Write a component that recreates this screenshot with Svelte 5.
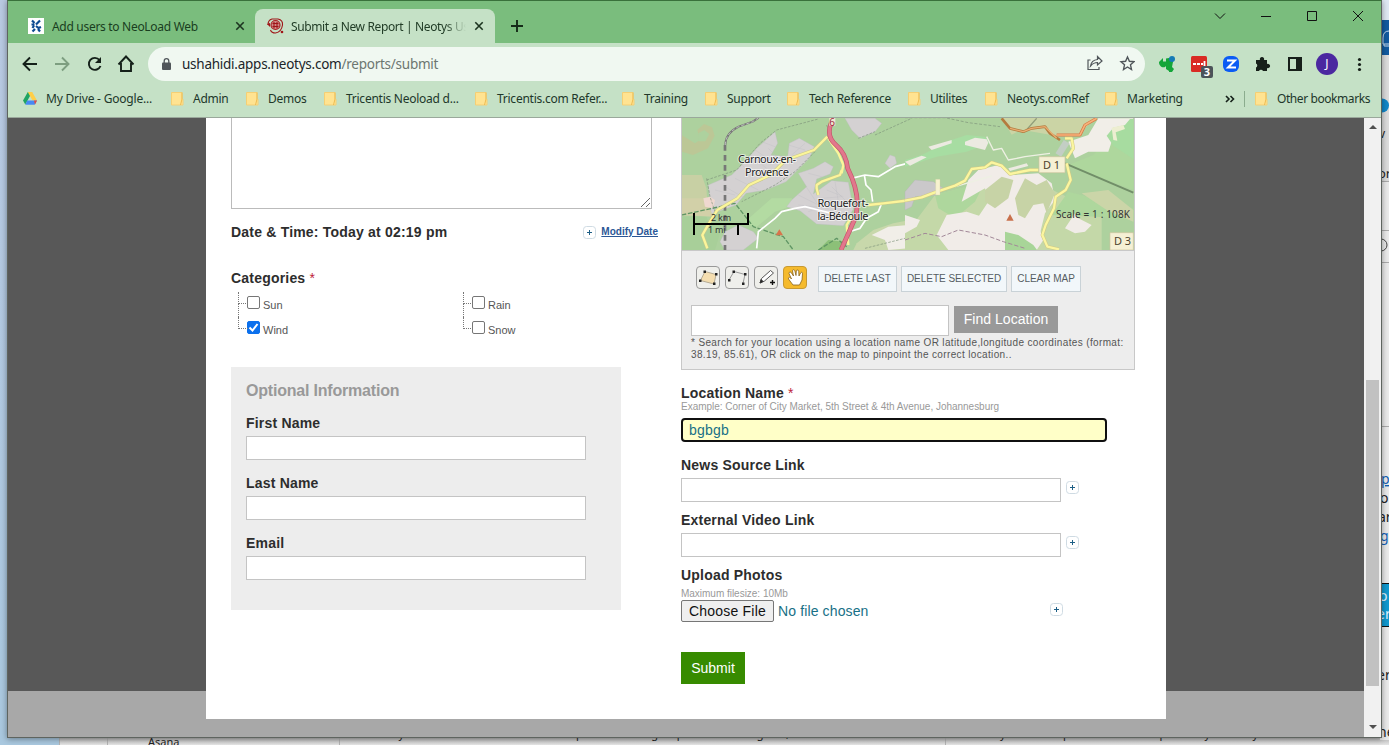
<script>
  const bookmarks = [
    { name: 'Admin', w: 75 },
    { name: 'Demos', w: 78 },
    { name: 'Tricentis Neoload d...', w: 151 },
    { name: 'Tricentis.com Refer...', w: 147 },
    { name: 'Training', w: 83 },
    { name: 'Support', w: 82 },
    { name: 'Tech Reference', w: 121 },
    { name: 'Utilites', w: 77 },
    { name: 'Neotys.comRef', w: 120 },
    { name: 'Marketing', w: 116 }
  ];
  const categories = [
    { name: 'Sun', on: false },
    { name: 'Rain', on: false },
    { name: 'Wind', on: true },
    { name: 'Snow', on: false }
  ];
  const optional = ['First Name', 'Last Name', 'Email'];
  const links = ['News Source Link', 'External Video Link'];
</script>

{#snippet folder()}
  <svg class="folder" width="13" height="14" viewBox="0 0 13 14">
    <path d="M.5.500h10.500v6l1 1v5.500H.5z" fill="#ffe391" stroke="#f5cf74" />
    <path d="M11 .5v6.500l-1.500 6" fill="none" stroke="#eebc52" />
  </svg>
{/snippet}

{#snippet plus()}
  <svg class="plus" width="13" height="13" viewBox="0 0 13 13">
    <rect x=".5" y=".5" width="12" height="12" rx="3" fill="#fff" stroke="#cfdbe3" />
    <path d="M4 6.500h5M6.500 4v5" stroke="#1d5f86" fill="none" />
  </svg>
{/snippet}

{#snippet cross()}
  <svg class="cross" width="10" height="10" viewBox="0 0 10 10"><path d="M1.300 1.300l7.400 7.400M8.700 1.300L1.300 8.700" stroke="#1c3420" stroke-width="1.600" /></svg>
{/snippet}

<div class="desktop">
  <svg class="behind" width="1389" height="745" viewBox="0 0 1389 745">
    <defs>
      <linearGradient id="sky" x1="0" y1="0" x2="0" y2="1">
        <stop offset="0" stop-color="#b9c9e2" /><stop offset="1" stop-color="#a9c8df" />
      </linearGradient>
      <linearGradient id="shade" x1="0" y1="0" x2="0" y2="1">
        <stop offset="0" stop-color="#aaa" /><stop offset="1" stop-color="#e6e6e6" />
      </linearGradient>
    </defs>
    <rect width="60" height="745" fill="url(#sky)" />
    <rect x="60" y="736" width="1329" height="9" fill="url(#shade)" />
    <path d="M59.500 738v7M107.500 738v7M339.500 738v7M945.500 738v7" stroke="#b3b3b3" />
    <rect x="1380" width="9" height="20" fill="#dfe8f3" />
    <rect x="1380" y="20" width="9" height="35" fill="#125a9f" />
    <path d="M1389 31q-6 0-6 7v6h6M1384 44v2h5" fill="none" stroke="#c8dcf0" />
    <rect x="1380" y="55" width="9" height="126" fill="#dcdcdc" />
    <circle cx="1382" cy="105.500" r="7" fill="#1287c8" />
    <rect x="1380" y="181" width="9" height="559" fill="#eaeaea" />
    <path d="M1380 181.500h9M1380 230.500h9M1380 262.500h9M1380 426.500h9" stroke="#aaa" />
    <circle cx="1381" cy="245" r="6" fill="none" stroke="#444" />
    <rect x="1380" y="584" width="9" height="42" fill="#1199cf" />
    <path d="M1380 583.500h9M1380 626.500h9" stroke="#111" />
    <g class="peek">
      <text x="1379" y="138" font-size="12">v</text><text x="1378" y="178" font-size="13">or</text>
      <text class="lnk" x="1381" y="484">p</text><text x="1380" y="503">o</text>
      <text x="1378" y="522">ar</text><text class="lnk" x="1380" y="541">g</text>
      <text class="inv" x="1379" y="601">o</text><text class="inv" x="1377" y="619">er</text>
      <text x="1377" y="680">er</text><text x="1378" y="737">ne</text>
      <text class="small" x="148" y="746">Asana</text>
      <text class="small" x="369" y="738" textLength="420">Hi etsy I have shared details for next steps and awaiting response - Best Regards,</text>
      <text class="small" x="982" y="738" textLength="276">they would help users and then provide you many</text>
    </g>
  </svg>

  <div class="window">
    <header class="tabs">
      <div class="tab">
        <svg width="16" height="16" viewBox="0 0 16 16"><rect width="16" height="16" fill="#fff" /><path d="M4 2.500l2.500 2.500M12 2.500L8 6.500M3.500 6.500h3M6 7.500L4.500 10M8 8l2.500 2 2.500-1M4.500 13.500L7 11M12 13.500l-2-2.500" fill="none" stroke="#0d4a91" stroke-width="2.200" /></svg>
        <span class="title first">Add users to NeoLoad Web</span>
        {@render cross()}
      </div>
      <div class="tab active">
        <svg width="17" height="16" viewBox="0 0 17 16"><circle cx="8.500" cy="7" r="4.500" fill="#cf8a85" stroke="#a82023" stroke-width="1.200" /><path d="M1 7q0-5 4-6h6q5 1 4.500 6-1 7-7 8-4 0-5-3M5.500 5.500h6M5.500 8.500h6M7 4v6.500M10 4v6.500" fill="none" stroke="#a01518" stroke-width="1.100" /><circle cx="15" cy="14" r="1.300" fill="#a01518" /><path d="M0 6l3-1v4z" fill="#a01518" /></svg>
        <span class="title second">Submit a New Report | Neotys Us</span>
        {@render cross()}
      </div>
      <svg class="new" width="12" height="12" viewBox="0 0 12 12"><path d="M6 0v12M0 6h12" stroke="#142b18" stroke-width="1.900" /></svg>
      <svg class="controls" width="152" height="14" viewBox="0 0 152 14" fill="none" stroke="#111">
        <path d="M2 4.500l5 5 5-5M48 7.500h10M94.500 2.500h9v9h-9zM140 2l10 10M150 2l-10 10" />
      </svg>
    </header>

    <div class="toolbar">
      <svg class="nav" width="116" height="20" viewBox="0 0 116 20" fill="none" stroke="#142019" stroke-width="1.900">
        <path d="M16 9H2.500M9 2.500L2.500 9l6.500 6.500" />
        <path d="M34 9h13.500M41 2.500l6.500 6.500-6.500 6.500" stroke="#7d9e80" />
        <path d="M78.500 5A6 6 0 1 0 79.500 11" /><path d="M80 2v6h-6z" fill="#142019" stroke="none" />
        <path d="M97.500 9.500l7.500-8 7.500 8M100 8v8h10V8" />
      </svg>
      <div class="address">
        <svg width="10" height="13" viewBox="0 0 10 13"><rect y="4.500" width="9" height="7.500" rx="1" fill="#50565a" /><path d="M2.200 5.500V3a2.300 2.300 0 0 1 4.600 0v2.500" fill="none" stroke="#50565a" stroke-width="1.300" /></svg>
        <span class="url">ushahidi.apps.neotys.com<i>/reports/submit</i></span>
        <svg class="actions" width="49" height="18" viewBox="0 0 49 18" fill="none" stroke="#50565a" stroke-width="1.200">
          <path d="M4.500 5H2v9.500h11V12M4.500 11q1-6 7-6.500V1.500L16 6l-4.500 4V7.500q-4 0-7 3.500z" />
          <path d="M41.500 2l1.900 4.300 4.600.4-3.500 3.100 1 4.700-4-2.500-4 2.500 1-4.700-3.500-3.100 4.600-.4z" stroke-width="1.400" />
        </svg>
      </div>
      <svg class="extensions" width="212" height="28" viewBox="1156 51 212 28">
        <path d="M1163 58l-4 4c0 4 3 6 6 5l1-1v3l3 2v1h3l2-3-2-2 1-5c0-3-2-4-4-4l-3 .5v3h-3z" fill="#13a538" />
        <circle cx="1172" cy="59" r="3" fill="#147bb5" />
        <rect x="1191" y="56" width="16" height="16" rx="1.500" fill="#d92b24" />
        <path d="M1193 64h3M1197 64h3M1201 64h2M1204.500 61v5" stroke="#fff" stroke-width="1.800" />
        <rect x="1201" y="66" width="12" height="12" rx="2" fill="#4c5359" />
        <text x="1203.800" y="76" font-size="11" font-weight="bold" fill="#fff">3</text>
        <rect x="1223" y="56" width="16" height="16" rx="6" fill="#0b5cf4" />
        <path d="M1227 60.500h8l-7 7h8" fill="none" stroke="#fff" stroke-width="2" />
        <path d="M1256 60h4a2.200 2.200 0 1 1 4 0h3v4a2.200 2.200 0 1 1 0 4v3h-4a2.200 2.200 0 0 0-4 0h-3v-3.500a2.200 2.200 0 0 0 0-4z" fill="#17201a" />
        <path d="M1289 58h12v12h-12z" fill="none" stroke="#17201a" stroke-width="2" /><rect x="1296" y="57" width="6" height="14" fill="#17201a" />
        <circle cx="1327" cy="64" r="11" fill="#4b28a0" />
        <text x="1327" y="68" text-anchor="middle" font-size="12" fill="#fff">J</text>
        <g fill="#17201a"><circle cx="1359.500" cy="59.500" r="1.600" /><circle cx="1359.500" cy="64.500" r="1.600" /><circle cx="1359.500" cy="69.500" r="1.600" /></g>
      </svg>
    </div>

    <nav class="bookmarks">
      <div class="mark drive">
        <svg width="14" height="13" viewBox="0 0 14 13"><path d="M4.800 0h4.400L7 4 2.300 12.500 0 8.500z" fill="#1fa463" /><path d="M4.800 0h4.400L14 8.500H9.500z" fill="#ffcf48" /><path d="M4.200 8.500H14l-2.300 4.200H2.300z" fill="#4688f4" /><path d="M11 8.500h3l-2 4z" fill="#e5493c" /></svg>
        <span>My Drive - Google...</span>
      </div>
      {#each bookmarks as b}
        <div class="mark" style="width:{b.w}px">{@render folder()}<span>{b.name}</span></div>
      {/each}
      <svg class="more" width="10" height="8" viewBox="0 0 10 8"><path d="M1 1l3 3-3 3M5.500 1l3 3-3 3" fill="none" stroke="#142019" stroke-width="1.600" /></svg>
      <span class="sep"></span>
      <div class="mark other">{@render folder()}<span>Other bookmarks</span></div>
    </nav>

    <div class="view">
      <div class="page">
        <main class="sheet">
          <section class="left">
            <div class="textarea">
              <svg width="9" height="9" viewBox="0 0 9 9"><path d="M0 9l9-9M5 9l4-4" stroke="#555" stroke-width=".9" /></svg>
            </div>
            <div class="daterow">
              <h4>Date &amp; Time: Today at 02:19 pm</h4>
              {@render plus()}
              <a href="#date">Modify Date</a>
            </div>
            <h4 class="cathead">Categories <em>*</em></h4>
            <div class="cats">
              {#each categories as c, i}
                <label class="cat" class:last={i > 1}>
                  <span class="box" class:on={c.on}>
                    {#if c.on}<svg width="11" height="11" viewBox="0 0 11 11"><path d="M1.500 5.500l3 3 5-6.500" fill="none" stroke="#fff" stroke-width="2" /></svg>{/if}
                  </span>
                  <span class="catname">{c.name}</span>
                </label>
              {/each}
            </div>
            <div class="optional">
              <h3>Optional Information</h3>
              {#each optional as o}
                <h4>{o}</h4>
                <div class="field"></div>
              {/each}
            </div>
          </section>

          <section class="right">
            <div class="mapbox">
              <svg class="map" width="452" height="132" viewBox="682 118 452 132">
                <rect x="682" y="118" width="452" height="132" fill="#add19e" />
                <g transform="translate(675 115) scale(.33333)" fill="none" stroke-linejoin="round">
                  <path d="M20 180l60 0 14 40 6 80-80 2z" fill="#c8d0a4" />
                  <path d="M20 60l40 25 15-10-8-30 20-18 24 10 8 25-20 38-45 20-34-10z" fill="#bcc796" />
                  <path d="M70 55l18-10 15 12-12 22-20 0z" fill="#add19e" />
                  <path d="M210 320l80-70 60 0 10 20-60 20-60 50z" fill="#b3dba2" />
                  <path d="M545 385l50-40 60-20 50-10v90h-170z" fill="#c8d8ab" />
                  <path d="M590 360l50-25 60-5v70l-60 5-10-30z" fill="#f1eee8" />
                  <path d="M20 305l75 0 10 30 30 20-15 50H20z" fill="#a8cf99" />
                  <g fill="#d4d1d2" stroke="#bdbbc1" stroke-width="1">
                    <path d="M100 210l70-30 35-35 40-45 55-50 8 35-20 35 50 5 5-40 30-15 45 25-15 35-30 30-40 40-60 25-60 10-30 35-75 28z" />
                    <path d="M350 255l45-40-25-40 45-15 35-20 25 15-10 22-40 15-10 45 55-40 50 5 15 80-30 50-80-5-50-40-40-12z" />
                    <path d="M510 10h90l20 15-20 25-45 20-25-25zM630 145l15-25 15 5 5 20-20 15z" />
                    <path d="M150 350l40-20 45 20 15 20-45 35h-55l-15-25z" />
                    <path d="M195 145l40 35M180 190l70 35M150 215l60 35M225 120l50 40M280 100l30 30M350 120l40-35M370 240l60 30M390 210l40 60M455 225l50 20M480 200l10 60M370 270l90 10M120 225l60 15M240 105l30 20M250 140l60-10M260 80l40 15M340 90l50 15M400 175l40 10M440 250l60-5M470 215l60 60M400 290l90-30" />
                  </g>
                  <path d="M20 250h70l10 20 15 35-95-5z" fill="#d2d0a8" />
                  <path d="M85 250l20-5 15 10-5 25-25-5z" fill="#efd8d0" />
                  <path d="M430 405l30-30 45 5 0 25z" fill="#8cc078" />
                  <path d="M20 300l160-35 55 70 90 30 30 40M430 405l55-35 30 25" stroke="#5f9564" stroke-width="4" stroke-dasharray="14 5" />
                  <path d="M95 190l10 55 20 60M95 195l90-30 70-80 50-40 125-33M420 110l-60 60-60 40-100 50M455 30l5 15M600 60l110-50M570 400l140-35M550 70l50-20" stroke="#7d927a" stroke-width="2" stroke-dasharray="8 4" />
                  <path d="M150 90v315" stroke="#777" stroke-width="8" stroke-dasharray="17 13" />
                  <path d="M151 90q0-35 40-55l42-15 18-12" stroke="#777" stroke-width="6" />
                  <path d="M151 90q0-35 40-55l42-15 18-12" stroke="#e1e1e1" stroke-width="2" stroke-dasharray="10 6" />
                  <path d="M245 400l5-50 50-40 20-20 40-10 30-5 40 10 40 10M530 190l40-10 40 5 50-30 45-12M568 180l5 30 15 15 5 35M620 265l-10 25-35 20-20 30-25 8" stroke="#fff" stroke-width="5" />
                  <path d="M97 400l-15-40 20-35 25-40 60-35 35-40 65-30 45-45 85-30 40-40M500 165l-5 15-55 20-15 10 0 10 5 20M580 270l45-5 85-10" stroke="#c9c88b" stroke-width="10" />
                  <path d="M97 400l-15-40 20-35 25-40 60-35 35-40 65-30 45-45 85-30 40-40M500 165l-5 15-55 20-15 10 0 10 5 20M580 270l45-5 85-10M460 70l30 45 15 35-5 25M520 390l-5-60 15-25" stroke="#fbf59a" stroke-width="7" />
                  <path d="M468 25q-15 40 15 65t35 70q45 90 20 155l-40 90" stroke="#c4556a" stroke-width="14" />
                  <path d="M468 25q-15 40 15 65t35 70q45 90 20 155l-40 90" stroke="#e2778c" stroke-width="10" />
                  <path d="M302 361l11-18 11 18z" fill="#d8744b" />
                  <rect x="463" y="3" width="18" height="29" fill="#eee8d2" />
                </g>
                <g transform="translate(905 115) scale(.33333)" fill="none" stroke-linejoin="round">
                  <path d="M290 9h280l-50 50-60 5-110-20-30 15z" fill="#cbd4a5" />
                  <path d="M0 350l30-30 60-80 120-30 120 10 60-20 200 95v110H0z" fill="#c4d8a8" />
                  <path d="M490 150l195 75V100l-70-35-50 55zM440 300l50-70 195 50v35l-110-10zM90 240l150-40-30 60-60 50-50-30z" fill="#aed79d" />
                  <path d="M530 235l80-10 75 60v35l-80-35z" fill="#cbd5a8" />
                  <path d="M0 135l50-15 90-45 45-15 55 5 15 20-70 25-90 15-95 30z" fill="#a7dda2" />
                  <path d="M580 10l60 0 45 0-25 40-30 0-20 60-60 0-40 20-20-50 60-20z" fill="#f1eee8" />
                  <path d="M625 38l35-8 15-18 10 0v120l-60-40-20-30z" fill="#a7dca0" />
                  <path d="M620 38l35-8 5 12-28 10 5 25-12-2z" fill="#edeed1" />
                  <path d="M190 195l30-30 60-15 45 30 75-5 40 30 10 50-30 40-20 80-40 25-50-40-50 10-20-30-30-20 40-60-10-40-70 40z" fill="#f1ece8" />
                  <path d="M95 360l30-60 60-10 60 20 60-20 40 40 60 15 10 30-20 30H130zM0 300l45 15-10 20-35 20zM480 340l30-45 10 15 40 20-20 20-30 5z" fill="#f1ece8" />
                  <path d="M240 225l50-40 35 10-15 55-40 30-30-20z" fill="#c7d3a6" />
                  <path d="M330 250l30-60 35 20 30-15 25 40-25 60-10-30-30 5-25 40-20-10z" fill="#c7d3a6" />
                  <path d="M300 350l40 10 45 30 15 20h-100z" fill="#a8d598" />
                  <path d="M0 230l30-35 55 5 30 20-15 20-70 5-10 30-20 10z" fill="#cac8ca" stroke="#b2b1b7" />
                  <path d="M0 140l50-18 15 5-50 25zM70 95l70-20v10l-60 20zM180 80l30-12 35 5 5 10-10 22-60-15zM310 160l55-15 5 8-55 15z" fill="#eceae1" />
                  <path d="M0 8l120 0 70 15 95 12" stroke="#7d927a" stroke-width="2" stroke-dasharray="9 5" />
                  <path d="M0 375l60-20 50 10 50-20 80 15 55 20 65 20" stroke="#a28898" stroke-width="3" stroke-dasharray="13 6" />
                  <path d="M480 145l205 88" stroke="#718e68" stroke-width="6" /><path d="M395 10l-35 40" stroke="#909c79" stroke-width="4" />
                  <path d="M245 65l20 40 25-5 20 35 50-10 75-10M150 215l110-32" stroke="#eef0e3" stroke-width="4" />
                  <path d="M485 80l-25 40" stroke="#c3cec4" stroke-width="20" />
                  <path d="M290 10l25 30 40 10 25-10 40-5 15 20 30 20" stroke="#b47b3e" stroke-width="8" />
                  <path d="M315 40l40 10 25-10 40-5 35 35" stroke="#e9ae72" stroke-width="4" />
                  <path d="M455 60l70 0 15-30 35-20" stroke="#da7946" stroke-width="9" /><path d="M455 60l70 0 15-30 35-20" stroke="#f6b37b" stroke-width="5" />
                  <path d="M0 257l50-10 40-15 60-20 30-15 20-35 40-5 20-15 30 10 25 25 60-12 25 0M485 145l12 50-15 30-30 20-5 35-25 50-10 30 15 35 35 8M485 130l20-30-5-30-20 0" stroke="#d0c985" stroke-width="10" />
                  <path d="M0 257l50-10 40-15 60-20 30-15 20-35 40-5 20-15 30 10 25 25 60-12 25 0M485 145l12 50-15 30-30 20-5 35-25 50-10 30 15 35 35 8M485 130l20-30-5-30-20 0" stroke="#fbf69f" stroke-width="7" />
                  <path d="M304 317l11-20 11 20z" fill="#c8704c" />
                  <path d="M92 193h13v47h-13z" fill="#f7f2cf" stroke="#d9d1a3" />
                  <path d="M402 125h78v48h-78zM615 353h70v52h-70z" fill="#f5f0d4" stroke="#cdc69f" stroke-width="2" />
                </g>
                <g class="place">
                  <text x="767" y="163" textLength="58">Carnoux-en-</text>
                  <text x="767" y="176" textLength="44">Provence</text>
                  <text x="843" y="206.500" textLength="51">Roquefort-</text>
                  <text x="843" y="219.500" textLength="51">la-Bédoule</text>
                </g>
                <g class="road"><text x="1051.500" y="169">D 1</text><text x="1122.500" y="245">D 3</text><text class="six" x="832" y="126">6</text></g>
                <g class="scale"><text class="sm" x="711" y="221">2 km</text><text class="sm" x="708" y="233">1 mi</text><text x="1056" y="218" textLength="74">Scale = 1 : 108K</text></g>
                <path d="M694 213v22M693 224h56M748 213v12M738 224v11" fill="none" stroke="#000" stroke-width="2" />
              </svg>
              <div class="tools">
                <span class="tool"><svg width="22" height="21" viewBox="0 0 22 21"><path d="M3.500 13.500L8 4.500l11 3-2 9.500z" fill="#f5deb0" stroke="#b5ab94" /><path d="M2 12.500h2.500V15H2zM6.500 3.500H9V6H6.500zM18 6h2.500v2.500H18zM16 15.500h2.500V18H16z" fill="#222" /></svg></span>
                <span class="tool"><svg width="22" height="21" viewBox="0 0 22 21"><path d="M3 13L8 4.500l11 3-2 9" fill="none" stroke="#999" /><path d="M2 12h2.500v2.500H2zM6.500 3.500H9V6H6.500zM18 6h2.500v2.500H18zM16 15.500h2.500V18H16z" fill="#222" /></svg></span>
                <span class="tool"><svg width="22" height="21" viewBox="0 0 22 21"><path d="M5 16l1.500-4.500L15.500 3.500l3 2.500L9.500 14z" fill="#fff" stroke="#555" /><path d="M5 16l1.200-3.500L8 14.500z" fill="#222" stroke="#333" /><path d="M15 15.500h5M17.500 13v5" stroke="#111" stroke-width="1.400" /></svg></span>
                <span class="tool on"><svg width="22" height="21" viewBox="0 0 22 21"><path d="M9 18L4.500 12c-.5-2 1.500-2.500 3 0L5 6.500c0-2 1.800-2 2.500-.5L9.500 9 8.500 4c.3-2 2-1.500 2.400 0L12 8.500l.3-4.500c.5-1.500 2.200-1.300 2.400.2L15 9l1.500-3c.8-1.300 2.200-.8 2 .8L18 13l-2.500 5z" fill="#fff" stroke="#89631c" stroke-width=".8" /></svg></span>
                <button class="del d1">DELETE LAST</button>
                <button class="del d2">DELETE SELECTED</button>
                <button class="del d3">CLEAR MAP</button>
              </div>
              <div class="search"><div class="query"></div><button class="find">Find Location</button></div>
              <p class="help">* Search for your location using a location name OR latitude,longitude coordinates (format:<br />38.19, 85.61), OR click on the map to pinpoint the correct location..</p>
            </div>

            <h4 class="loc">Location Name <em>*</em></h4>
            <p class="hint">Example: Corner of City Market, 5th Street &amp; 4th Avenue, Johannesburg</p>
            <div class="focus">bgbgb</div>
            {#each links as l}
              <h4 class="linkhead">{l}</h4>
              <div class="linkrow"><div class="field"></div>{@render plus()}</div>
            {/each}
            <h4 class="linkhead">Upload Photos</h4>
            <p class="hint photo">Maximum filesize: 10Mb</p>
            <div class="filerow">
              <button class="choose">Choose File</button><span>No file chosen</span>{@render plus()}
            </div>
            <button class="submit">Submit</button>
          </section>
        </main>
      </div>
      <div class="scroll">
        <svg width="8" height="4" viewBox="0 0 8 4"><path d="M0 4l4-4 4 4z" fill="#505050" /></svg>
        <div class="thumb"></div>
        <svg width="8" height="4" viewBox="0 0 8 4"><path d="M0 0l4 4 4-4z" fill="#505050" /></svg>
      </div>
    </div>
  </div>
</div>

<style>
  :global(body) { margin: 0; overflow: hidden; }
  * { box-sizing: border-box; }
  svg { display: block; flex: none; }
  h3, h4, p { margin: 0; }
  button { padding: 0; border: 0; font-family: inherit; }
  .desktop { position: relative; width: 1389px; height: 745px; overflow: hidden; font-family: "Liberation Sans", Arial, sans-serif; }
  .peek text { font-family: "Noto Sans", sans-serif; fill: #222; }
  .peek { font-size: 14px; }
  .peek .lnk { fill: #1260b5; text-decoration: underline; }
  .peek .inv { fill: #dff3ff; }
  .peek .small { font-size: 11px; }
  .window { position: absolute; left: 7px; top: 0; width: 1375px; height: 738px; border: 1px solid #5e645f; border-top-color: #39713b; display: flex; flex-direction: column; box-shadow: 0 1px 6px rgba(0, 0, 0, .4); font-family: "Noto Sans", sans-serif; }

  .tabs { height: 42px; background: #7abd7d; display: flex; align-items: flex-end; flex: none; }
  .tab { display: flex; align-items: center; height: 34px; width: 247px; padding: 0 10px 0 20px; font-size: 12px; color: #193e20; }
  .tab.active { background: #c5e1c6; width: 240px; border-radius: 8px 8px 0 0; padding: 0 11px 0 12px; color: #223d27; }
  .title { margin-left: 8px; flex: 1; white-space: nowrap; overflow: hidden; }
  .first { letter-spacing: -.3px; }
  .second { margin-left: 7px; margin-right: 8px; letter-spacing: -.37px; mask-image: linear-gradient(90deg, #000 88%, transparent); }
  .new { margin: 0 0 11px 16px; }
  .controls { margin: 0 16px 20px auto; }

  .toolbar { height: 43px; background: #c5e1c6; display: flex; align-items: center; padding: 0 8px 0 13px; flex: none; }
  .address { margin: -1px 0 0 11px; width: 997px; height: 34px; border-radius: 17px; background: #f0f8f1; display: flex; align-items: center; padding: 0 10px 0 14px; flex: none; }
  .url { margin-left: 10px; font-size: 13.500px; letter-spacing: -.25px; color: #20252a; }
  .url i { font-style: normal; color: #6c7670; }
  .actions { margin-left: auto; }
  .extensions { margin-left: 11px; }
  .bookmarks { height: 32px; background: #c5e1c6; border-bottom: 1px solid #9aa89b; display: flex; align-items: center; padding: 0 10px 6px 15px; font-size: 12px; color: #21372a; white-space: nowrap; letter-spacing: -.25px; flex: none; }
  .mark { display: flex; align-items: center; flex: none; gap: 9px; }
  .drive { width: 148px; letter-spacing: -.2px; }
  .other { letter-spacing: -.42px; }
  .more { margin-left: 4px; }
  .sep { width: 1px; height: 16px; margin: 0 10px 0 9px; background: #8bac8e; flex: none; }

  .view { height: 619px; display: flex; font-family: "Liberation Sans", Arial, sans-serif; }
  .page { width: 1356px; background: linear-gradient(#585858 573px, #a8a8a8 573px); display: flex; }
  .sheet { margin-left: 198px; width: 960px; height: 601px; background: #fff; padding-left: 25px; display: flex; }
  .scroll { width: 17px; background: #f1f1f1; display: flex; flex-direction: column; align-items: center; padding: 7px 0 8px; }
  .thumb { width: 13px; height: 306px; margin: 251px 0 auto; background: #c1c1c1; flex: none; }
  .left { width: 450px; }
  .right { width: 454px; }
  h4 { font-size: 14px; line-height: 16px; color: #2d2d2d; letter-spacing: .2px; white-space: nowrap; }
  em { font-style: normal; font-weight: normal; color: #bd1e39; }
  .textarea { width: 421px; height: 91px; border: solid #bbb; border-width: 0 1px 1px; display: flex; justify-content: flex-end; align-items: flex-end; padding: 1px; }
  .daterow { display: flex; align-items: center; height: 16px; margin-top: 15px; width: 427px; }
  .daterow h4 { flex: 1; }
  .daterow a { margin: -2px 0 0 5px; font-size: 10px; font-weight: bold; color: #2b5796; }
  .cathead { margin-top: 30px; }
  .cats { display: grid; grid-template-columns: 225px 225px; grid-auto-rows: 25px; margin: 6px 0 0 7px; }
  .cat { display: flex; position: relative; padding: 4px 0 0 9px; font-size: 11px; color: #555; }
  .cat::before { content: ''; position: absolute; left: 0; top: 0; width: 9px; height: 11px; border-left: 1px dotted #777; border-bottom: 1px dotted #777; }
  .cat:not(.last)::after { content: ''; position: absolute; left: 0; top: 11px; height: 14px; border-left: 1px dotted #777; }
  .box { width: 13px; height: 13px; border: 1px solid #767676; border-radius: 2px; background: #fff; }
  .box.on { border-color: #0b70ed; background: #0b70ed; }
  .catname { margin: 3px 0 0 3px; line-height: 13px; }
  .optional { margin-top: 25px; width: 390px; height: 243px; background: #ededed; padding: 14px 15px; }
  .optional h3 { font-size: 16px; line-height: 19px; color: #999; letter-spacing: -.2px; }
  .optional h4 { margin-top: 15px; }
  .field { width: 340px; height: 24px; background: #fff; border: 1px solid #c4c4c4; }
  .optional .field { margin-top: 5px; }

  .mapbox { height: 252px; border: solid #c8c8c8; border-width: 0 1px 1px; background: #ededed; }
  .map { border-bottom: 1px solid #c8c8c8; height: 133px; }
  .place text { font: 11px "Noto Sans", sans-serif; text-anchor: middle; fill: #222; stroke: #fff; stroke-width: 2px; stroke-opacity: .6; paint-order: stroke; }
  .road text { font: 11px "Noto Sans", sans-serif; text-anchor: middle; fill: #4c432e; }
  .road .six { fill: #a42942; font-size: 10px; }
  .scale text { font: 10px "Noto Sans", sans-serif; fill: #333; }
  .scale .sm { font-size: 9px; letter-spacing: -.2px; }
  .tools { display: flex; padding: 15px 0 0 14px; gap: 5px; height: 54px; }
  .tool { width: 24px; height: 23px; border: 1px solid #999; border-radius: 4px; background: #efefeb; overflow: hidden; }
  .tool.on { background: #f5ba2c; border-color: #c79932; }
  .del { height: 26px; border: 1px solid #c9d2d7; background: #f2f7fa; color: #555d62; font-size: 10px; letter-spacing: -.02px; white-space: nowrap; padding-bottom: 1px; }
  .d1 { width: 79px; margin-left: 6px; }
  .d2 { width: 106px; margin-left: -1px; }
  .d3 { width: 70px; margin-left: -1px; }
  .search { display: flex; padding-left: 9px; gap: 5px; }
  .query { width: 258px; height: 31px; background: #fff; border: 1px solid #c4c4c4; }
  .find { width: 104px; height: 27px; margin-top: 1px; padding-bottom: 2px; background: #999; color: #fff; font-size: 14px; letter-spacing: .05px; }
  .help { padding: 1px 0 0 9px; font-size: 10px; line-height: 12px; letter-spacing: .355px; color: #555; white-space: nowrap; }
  .loc { margin-top: 15px; }
  .hint { font-size: 10px; line-height: 11px; letter-spacing: -.02px; color: #999; white-space: nowrap; }
  .focus { margin-top: 6px; width: 426px; height: 24px; border: 2px solid #101010; border-radius: 4px; background: #ffffc8; color: #187086; font-size: 14px; line-height: 21px; padding-left: 6px; letter-spacing: .2px; }
  .linkhead { margin-top: 15px; }
  .linkrow { display: flex; gap: 5px; margin-top: 5px; }
  .linkrow .field { width: 380px; }
  .linkrow :global(.plus) { margin-top: 3px; }
  .linkrow + .linkhead { margin-top: 10px; }
  .photo { margin-top: 5px; }
  .filerow { display: flex; height: 22px; margin-top: 1px; color: #187086; font-size: 14px; line-height: 22px; letter-spacing: .13px; }
  .choose { width: 93px; border: 1px solid #767676; border-radius: 2px; background: #efefef; color: #111; font-size: 14px; margin-right: 4px; letter-spacing: .2px; }
  .filerow :global(.plus) { margin: 3px 72px 0 auto; }
  .submit { display: block; width: 64px; height: 32px; margin-top: 30px; background: #378b00; color: #fff; font-size: 14px; }
</style>
